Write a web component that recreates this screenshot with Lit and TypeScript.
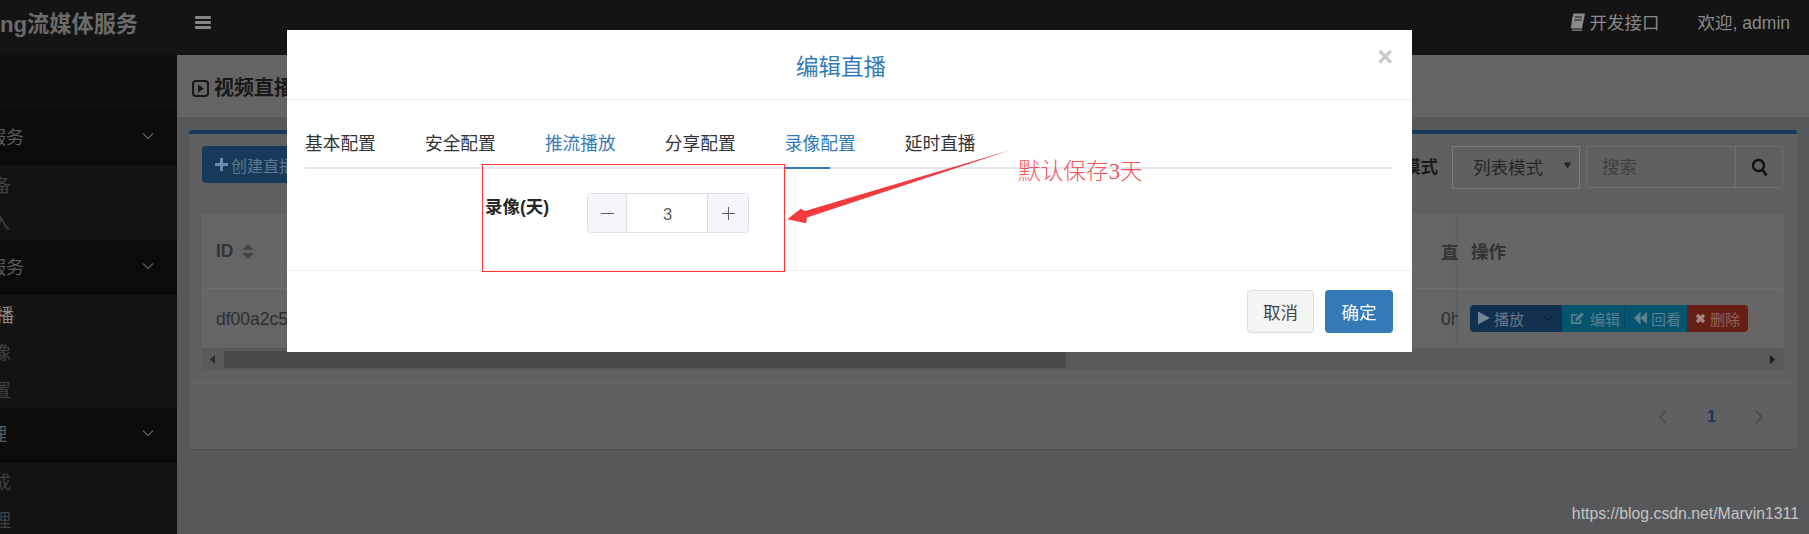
import { LitElement, html, css, svg } from "lit";
import { customElement } from "lit/decorators.js";

const chevron = html`<svg class="chev" width="12" height="8" viewBox="0 0 12 8"><path d="M1 1.5 6 6.5 11 1.5" fill="none" stroke="currentColor" stroke-width="1.4"/></svg>`;

@customElement("app-root")
export class AppRoot extends LitElement {
  static styles = css`
    :host { display: block; width: 1809px; height: 534px; position: relative; overflow: hidden; background: #57585a;
      font-family: "Liberation Sans", "Noto Sans CJK SC", sans-serif; font-size: 17px; }
    * { box-sizing: border-box; }
    .top { height: 55px; background: #141414; display: flex; align-items: center; color: #8a8a8a; overflow: hidden; }
    .logo { width: 177px; flex: none; font-size: 22.2px; font-weight: 700; color: #6b6b6b; white-space: nowrap; padding-bottom: 11px; }
    .burger { margin-left: 18px; width: 16px; height: 13px; margin-bottom: 10px; display: flex; flex-direction: column; justify-content: space-between; }
    .burger i { height: 3px; background: #858585; border-radius: 1px; display: block; }
    .top-right { margin-left: auto; display: flex; align-items: center; font-size: 17.5px; padding-right: 19px; padding-bottom: 12px; }
    .api { display: flex; align-items: center; gap: 4px; margin-right: 38px; }
    .body { display: flex; height: 479px; }
    .side { width: 177px; flex: none; background: #0e0e0e; padding-top: 55px; overflow: hidden; font-size: 18px; }
    .hd { height: 55px; background: #0b0b0b; color: #5c5c5c; display: flex; align-items: center; justify-content: space-between; padding-right: 23px; padding-bottom: 4px; }
    .hd .chev { color: #585858; }
    .hd span { margin-left: -12px; white-space: nowrap; }
    .sub { background: #131313; color: #414141; }
    .sub div { height: 37.5px; display: flex; align-items: center; }
    .sub .on { color: #8b8b8b; }
    .m4 { margin-left: -4px; } .m7 { margin-left: -7px; } .m8 { margin-left: -8px; }
    .hd span.m11 { margin-left: -11px; }
    .main { flex: 1; min-width: 0; display: flex; flex-direction: column; }
    .ch { height: 62px; background: #646464; padding: 23px 0 0 15px; display: flex; align-items: flex-start; gap: 5px; color: #181818; font-size: 20px; font-weight: 700; line-height: 20px; }
    .ch svg { margin-top: 2px; }
    .panel { margin: 13px 12px 0 12px; height: 319px; background: #606060; border-top: 4px solid #183a5a; border-radius: 3px; box-shadow: 0 1px 1px rgba(0,0,0,.1); display: flex; flex-direction: column; }
    .tools { height: 80px; padding: 12px 14px 0 13px; display: flex; align-items: flex-start; }
    .create { width: 124px; height: 37px; background: #183a5a; border-radius: 4px; color: #5a7890; display: flex; align-items: center; gap: 3px; padding-left: 13px; font-size: 16px; }
    .mode { margin-left: auto; font-weight: 700; color: #1c1c1c; font-size: 17.5px; line-height: 42px; margin-right: 14px; }
    .select { width: 128px; height: 43px; border: 1px solid #7c7c7c; color: #262626; display: flex; align-items: center; justify-content: space-between; padding: 0 8px 2px 20px; margin-right: 6px; font-size: 17.5px; }
    .select svg { flex: none; margin-top: -2px; }
    .search { display: flex; height: 42px; border: 1px solid #6e6e6e; border-radius: 2px; width: 197px; }
    .search .ph { flex: 1; padding: 0 0 4px 15px; color: #3f3f3f; display: flex; align-items: center; font-size: 17.5px; }
    .search .go { width: 47px; background: #5f5f5f; border-left: 1px solid #6e6e6e; display: flex; align-items: center; justify-content: center; }
    .table { margin: 0 13px; border: 1px solid #6a6a6a; border-bottom: none; display: flex; height: 134px; background: #656565; }
    .scroll { flex: 1; min-width: 0; display: flex; flex-direction: column; overflow: hidden; }
    .th { height: 74px; padding: 0 13px; display: flex; align-items: center; font-weight: 700; color: #333; border-bottom: 1px solid #6d6d6d; font-size: 17.5px; gap: 8px; }
    .td { height: 59px; padding: 1px 13px 0; display: flex; align-items: center; color: #2e2e2e; font-size: 17.5px; }
    .cols { justify-content: space-between; }
    .id { display: flex; align-items: center; gap: 8px; }
    .cols span:last-child { margin-right: -13px; width: 17px; flex: none; white-space: nowrap; }
    .fixed { width: 325px; flex: none; background: #666; box-shadow: -2px 0 3px rgba(0,0,0,.06); display: flex; flex-direction: column; }
    .fixed .th { padding-left: 13px; padding-bottom: 3px; }
    .fixed .td { padding: 0 13px 1px 12px; }
    .ops { display: flex; height: 27px; font-size: 15px; border-radius: 4px; overflow: hidden; color: #66798c; }
    .ops > div { display: flex; align-items: center; white-space: nowrap; }
    .play { width: 92px; background: #123050; padding-left: 8px; gap: 4px; }
    .play .chev { color: #0c2238; margin-left: 14px; }
    .edit { width: 63px; background: #03546c; padding-left: 8px; gap: 5px; border-right: 1px solid #034a60; color: #5d8090; }
    .back { width: 62px; background: #03546c; padding-left: 9px; gap: 4px; color: #5d8090; }
    .del { width: 61px; background: #651f14; padding-left: 8px; gap: 4px; color: #8f645c; }
    .bar { margin: 0 13px; height: 22px; background: #5a5a5a; display: flex; align-items: center; padding: 0 9px 0 8px; }
    .thumb { width: 842px; height: 17px; background: #4a4a4a; margin-left: 9px; }
    .bar .end { margin-left: auto; }
    .pager { margin-top: 13px; border-top: 1px solid #666; flex: 1; display: flex; align-items: center; justify-content: flex-end; padding: 0 33px 0 0; gap: 40px; }
    .pager b { color: #15385c; font-size: 16px; width: 8px; }
    .mark { position: absolute; right: 10px; top: 504px; color: #c4c4c4; font-size: 15.8px; line-height: 20px; white-space: nowrap; }

    .modal { position: absolute; left: 287px; top: 30px; width: 1125px; height: 322px; background: #fff; display: flex; flex-direction: column; color: #333; }
    .m-head { height: 70px; border-bottom: 1px solid #f0f0f0; display: flex; align-items: center; justify-content: center; padding-right: 17px; position: relative; }
    .m-title { color: #337ab7; font-size: 22.5px; }
    .close { position: absolute; right: 19px; top: 14px; color: #c9c9c9; font-size: 27px; font-weight: 700; line-height: 27px; }
    .m-body { height: 171px; border-bottom: 1px solid #f0f0f0; padding: 0 19px 0 18px; display: flex; flex-direction: column; }
    .tabs { height: 69px; display: flex; gap: 49.2px; align-items: flex-start; padding-top: 33px; border-bottom: 2px solid #e4e7ed; position: relative; font-size: 17.7px; line-height: 22px; }
    .tabs .link { color: #337ab7; }
    .tabs .ink { position: absolute; left: 480px; bottom: -2px; width: 45px; height: 2px; background: #337ab7; }
    .field { display: flex; padding: 24px 0 0 180px; }
    .lbl { font-weight: 700; font-size: 17.5px; width: 102px; line-height: 27px; padding-top: 1px; color: #262626; }
    .num { width: 162px; height: 40px; border: 1px solid #dcdfe6; border-radius: 4px; display: flex; overflow: hidden; color: #606266; }
    .num .b { width: 39px; background: #f5f7fa; display: flex; align-items: center; justify-content: center; }
    .num .b.l { border-right: 1px solid #dcdfe6; }
    .num .b.r { border-left: 1px solid #dcdfe6; width: 41px; }
    .num .v { flex: 1; display: flex; align-items: center; justify-content: center; font-size: 16.5px; padding: 2px 0 0 1px; }
    .m-foot { flex: 1; display: flex; align-items: flex-start; justify-content: flex-end; gap: 11px; padding: 19px 19px 0 0; }
    .btn { width: 67px; height: 43px; border-radius: 4px; display: flex; align-items: center; justify-content: center; font-size: 17.5px; }
    .cancel { background: #f4f4f4; border: 1px solid #ddd; color: #444; }
    .ok { background: #337ab7; color: #fff; width: 68px; }
    .box { position: absolute; left: 482px; top: 164px; width: 303px; height: 108px; border: 1px solid #f33; }
    .arrow { position: absolute; left: 780px; top: 140px; }
    .note { position: absolute; left: 1018px; top: 157px; color: #f4565c; font-size: 22.7px; line-height: 30px; font-family: "Liberation Serif", "Noto Sans CJK SC", serif; font-weight: 300; white-space: nowrap; }
  `;

  render() {
    return html`
      <div class="top">
        <div class="logo">ng流媒体服务</div>
        <div class="burger"><i></i><i></i><i></i></div>
        <div class="top-right">
          <div class="api">
            <svg width="17" height="18" viewBox="0 0 17 18"><path d="M4.5 0.5H16L13 15.5H3C1.5 15.5 1.5 14 2.2 13.5L3 6Z M3 16.5H13.5L13 17.8H3Z" fill="#8a8a8a"/><path d="M6 4H13M5.5 7H12.5" stroke="#141414" stroke-width="1"/></svg>
            <span>开发接口</span>
          </div>
          <span>欢迎, admin</span>
        </div>
      </div>
      <div class="body">
        <div class="side">
          <div class="hd"><span>服务</span>${chevron}</div>
          <div class="sub">
            <div><span class="m7">备</span></div>
            <div><span class="m8">入</span></div>
          </div>
          <div class="hd"><span>服务</span>${chevron}</div>
          <div class="sub">
            <div class="on"><span class="m4">播</span></div>
            <div><span class="m7">像</span></div>
            <div><span class="m7">置</span></div>
          </div>
          <div class="hd"><span class="m11">理</span>${chevron}</div>
          <div class="sub">
            <div><span class="m7">成</span></div>
            <div><span class="m7">理</span></div>
          </div>
        </div>
        <div class="main">
          <div class="ch">
            <svg width="17" height="17" viewBox="0 0 17 17"><rect x="1" y="1" width="15" height="15" rx="3" fill="none" stroke="#181818" stroke-width="2"/><path d="M6 4.5 12 8.5 6 12.5Z" fill="#181818"/></svg>
            <span>视频直播</span>
          </div>
          <div class="panel">
            <div class="tools">
              <div class="create">
                <svg width="13" height="13" viewBox="0 0 13 13"><path d="M5 0H8V5H13V8H8V13H5V8H0V5H5Z" fill="#6a8ca8"/></svg>
                <span>创建直播</span>
              </div>
              <div class="mode">模式</div>
              <div class="select"><span>列表模式</span>
                <svg width="7" height="9" viewBox="0 0 8 9"><path d="M0 1H8L4 8Z" fill="#222"/></svg>
              </div>
              <div class="search">
                <div class="ph">搜索</div>
                <div class="go"><svg width="17" height="19" viewBox="0 0 17 19"><circle cx="7.5" cy="7.5" r="5.5" fill="none" stroke="#111" stroke-width="2.4"/><path d="M11.5 12 15.5 17.5" stroke="#111" stroke-width="2.8"/></svg></div>
              </div>
            </div>
            <div class="table">
              <div class="scroll">
                <div class="th cols"><span class="id">ID
                  <svg width="12" height="15" viewBox="0 0 12 15"><path d="M6 0 12 6H0ZM0 9H12L6 15Z" fill="#444"/></svg></span><span>直</span></div>
                <div class="td cols"><span>df00a2c5</span><span>0h</span></div>
              </div>
              <div class="fixed">
                <div class="th">操作</div>
                <div class="td">
                  <div class="ops">
                    <div class="play">
                      <svg width="12" height="14" viewBox="0 0 13 14"><path d="M0 0 13 7 0 14Z" fill="#748696"/></svg>
                      <span>播放</span>${chevron}
                    </div>
                    <div class="edit">
                      <svg width="15" height="15" viewBox="0 0 16 15"><path d="M11 8.5V12.5H2V3.5H8" fill="none" stroke="#5d8090" stroke-width="1.8"/><path d="M6 7.5 12.5 1 14.8 3.2 8.2 9.8H6Z" fill="#5d8090"/></svg>
                      <span>编辑</span>
                    </div>
                    <div class="back">
                      <svg width="13" height="14" viewBox="0 0 14 14"><path d="M7 0V14L0 7ZM14 0V14L7 7Z" fill="#5d8090"/></svg>
                      <span>回看</span>
                    </div>
                    <div class="del">
                      <svg width="11" height="11" viewBox="0 0 11 11"><path d="M2 2 9 9M9 2 2 9" stroke="#a58a84" stroke-width="3.4"/></svg>
                      <span>删除</span>
                    </div>
                  </div>
                </div>
              </div>
            </div>
            <div class="bar">
              <svg width="5" height="9" viewBox="0 0 5 9"><path d="M5 0V9L0 4.5Z" fill="#2c2c2c"/></svg>
              <div class="thumb"></div>
              <svg class="end" width="5" height="9" viewBox="0 0 5 9"><path d="M0 0V9L5 4.5Z" fill="#1c1c1c"/></svg>
            </div>
            <div class="pager">
              <svg width="9" height="14" viewBox="0 0 9 14"><path d="M8 1 2 7 8 13" fill="none" stroke="#4a4a4a" stroke-width="1.6"/></svg>
              <b>1</b>
              <svg width="9" height="14" viewBox="0 0 9 14"><path d="M1 1 7 7 1 13" fill="none" stroke="#4a4a4a" stroke-width="1.6"/></svg>
            </div>
          </div>
        </div>
      </div>
      <div class="mark">https://blog.csdn.net/Marvin1311</div>

      <div class="modal">
        <div class="m-head">
          <div class="m-title">编辑直播</div>
          <div class="close">×</div>
        </div>
        <div class="m-body">
          <div class="tabs">
            <span>基本配置</span><span>安全配置</span><span class="link">推流播放</span><span>分享配置</span><span class="link">录像配置</span><span>延时直播</span>
            <div class="ink"></div>
          </div>
          <div class="field">
            <div class="lbl">录像(天)</div>
            <div class="num">
              <div class="b l"><svg width="13" height="13" viewBox="0 0 13 13"><path d="M0 6.5H13" stroke="#606266" stroke-width="1"/></svg></div>
              <div class="v">3</div>
              <div class="b r"><svg width="13" height="13" viewBox="0 0 13 13"><path d="M0 6.5H13M6.5 0V13" stroke="#606266" stroke-width="1"/></svg></div>
            </div>
          </div>
        </div>
        <div class="m-foot">
          <div class="btn cancel">取消</div>
          <div class="btn ok">确定</div>
        </div>
      </div>
      <div class="box"></div>
      <svg class="arrow" width="240" height="90" viewBox="780 140 240 90">
        ${svg`<path d="M787.3 219.3 800.7 208.7 805 211 1010.7 150 807 217.5 806 223.3Z" fill="#f33a3f"/>`}
      </svg>
      <div class="note">默认保存3天</div>
    `;
  }
}
